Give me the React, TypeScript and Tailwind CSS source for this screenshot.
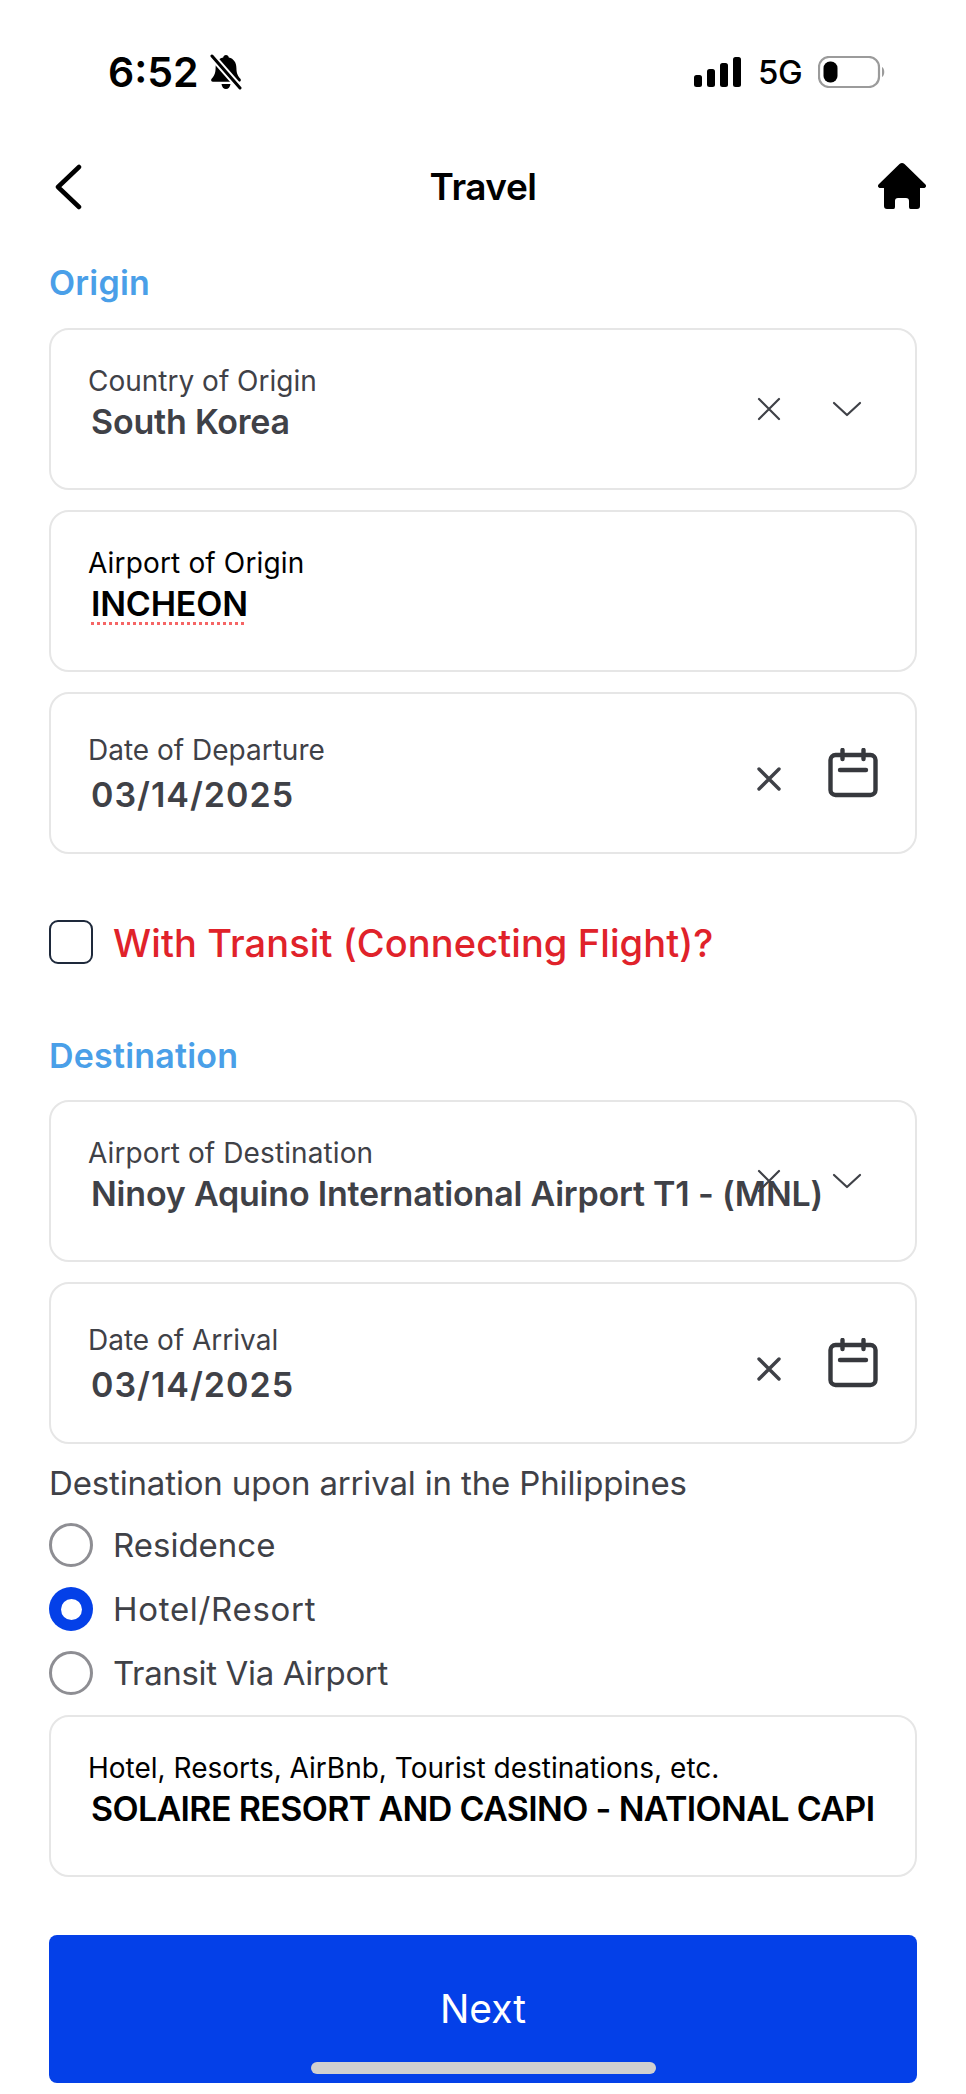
import React from "react";

const XIcon = ({ bold }: { bold?: boolean }) => (
  <svg width="26" height="26" viewBox="0 0 26 26" fill="none" stroke="#3f4147" strokeWidth={bold ? 3.4 : 2.2} strokeLinecap="round">
    <path d="M3 3 L23 23 M23 3 L3 23" />
  </svg>
);
const Chevron = () => (
  <svg width="30" height="18" viewBox="0 0 30 18" fill="none" stroke="#3f4147" strokeWidth="2.2" strokeLinecap="round" strokeLinejoin="round">
    <path d="M2 3 L15 15 L28 3" />
  </svg>
);
const Calendar = () => (
  <svg width="50" height="50" viewBox="0 0 50 50" fill="none" stroke="#36383d" strokeWidth="4.4" strokeLinecap="round" strokeLinejoin="round">
    <rect x="2.5" y="7" width="45" height="40" rx="5" />
    <path d="M14.5 2 V11 M35.5 2 V11" />
    <path d="M12 22 H38" />
  </svg>
);

function Field({ label, value, labelClass, valueClass, icons, mt, spell }: { label: string; value: string; labelClass: string; valueClass: string; icons?: "select" | "date"; mt: string; spell?: boolean }) {
  const isDate = icons === "date";
  return (
    <div className={`relative h-[162px] rounded-[20px] border-2 border-[#e6e6e6] pl-[37px] ${isDate ? "pt-[38px]" : "pt-[33px]"} ${mt}`}>
      <div className={`text-[28px] leading-[36px] ${labelClass}`}>{label}</div>
      <div className={`ml-[3px] ${isDate ? "mt-[7px]" : "mt-[3px]"} whitespace-nowrap text-[34px] leading-[40px] font-semibold ${valueClass}`}>
        <span className={spell ? "underline decoration-dotted decoration-[#f56565] decoration-[3px] underline-offset-[6px]" : ""}>{value}</span>
      </div>
      {icons === "select" && (
        <div className="absolute right-[53px] top-1/2 flex -translate-y-1/2 items-center gap-[50px]">
          <XIcon />
          <Chevron />
        </div>
      )}
      {isDate && (
        <div className="absolute right-[37px] top-[54px] flex items-start gap-[46px]">
          <div className="mt-[18px]"><XIcon bold /></div>
          <Calendar />
        </div>
      )}
    </div>
  );
}

const Radio = ({ label, on, tracking }: { label: string; on?: boolean; tracking?: string }) => (
  <div className="flex h-[44px] items-center gap-[20px]">
    {on ? (
      <div className="flex h-[44px] w-[44px] items-center justify-center rounded-full bg-[#0440e8]">
        <div className="h-[21px] w-[21px] rounded-full bg-white" />
      </div>
    ) : (
      <div className="h-[44px] w-[44px] rounded-full border-[3px] border-[#8e8e93]" />
    )}
    <span className={`text-[33px] leading-[44px] text-[#3f4147] ${tracking ?? ""}`}>{label}</span>
  </div>
);

export default function App() {
  return (
    <div className="min-h-[2094px] w-[966px] bg-white font-['Inter',sans-serif]">
      <div className="flex h-[90px] items-center justify-between pl-[108px] pr-[80px] pt-[54px]">
        <div className="flex items-center gap-[10px]">
          <span className="text-[41px] leading-[36px] font-semibold text-black">6:52</span>
          <svg width="34" height="36" viewBox="0 0 34 36">
            <path d="M17 1c1.600 0 2.600 1 2.800 2.400 5 1.200 7.600 5 7.600 10.600 0 6 2 8.600 4 10.800 1 1.200.4 3-1.400 3H4c-1.800 0-2.400-1.800-1.400-3 2-2.200 4-4.800 4-10.800 0-5.600 2.600-9.400 7.600-10.600C14.400 2 15.400 1 17 1zM12.500 30h9c-.3 3-2.200 5-4.500 5s-4.200-2-4.500-5z" fill="#000" />
            <path d="M3 2 L31 34" stroke="#fff" strokeWidth="7" />
            <path d="M3 2 L31 34" stroke="#000" strokeWidth="3" strokeLinecap="round" />
          </svg>
        </div>
        <div className="flex items-center gap-[16px]">
          <svg width="48" height="30" viewBox="0 0 48 30" fill="#000">
            <rect x="0" y="18" width="8" height="12" rx="2.500" />
            <rect x="13" y="12" width="8" height="18" rx="2.500" />
            <rect x="26" y="6" width="8" height="24" rx="2.500" />
            <rect x="39" y="0" width="8" height="30" rx="2.500" />
          </svg>
          <span className="w-[44px] text-[33px] leading-[32px] font-medium tracking-[-0.5px] text-black">5G</span>
          <svg width="68" height="32" viewBox="0 0 68 32" fill="none">
            <rect x="1" y="1" width="60" height="30" rx="10" stroke="#9b9b9b" strokeWidth="2.200" />
            <rect x="5.500" y="5.500" width="14" height="21" rx="6.500" fill="#000" />
            <path d="M64 11 C67 12.500 67 19.500 64 21 Z" fill="#9b9b9b" />
          </svg>
        </div>
      </div>

      <div className="mt-[72px] flex h-[50px] items-center">
        <div className="w-[89px] pl-[53px]">
          <svg className="block" width="30" height="46" viewBox="0 0 30 46" fill="none" stroke="#000" strokeWidth="4.500" strokeLinecap="round" strokeLinejoin="round">
            <path d="M26 3 L5 23 L26 43" />
          </svg>
        </div>
        <span className="flex-1 text-center text-[37px] leading-[46px] font-semibold tracking-[-0.5px] text-black">Travel</span>
        <div className="flex w-[89px] justify-end self-start pr-[39px]">
          <svg className="block shrink-0" width="50" height="48" viewBox="0 0 50 48" fill="#000">
            <path d="M22.500 2 Q25 0 27.500 2 L48.500 22.500 Q50 24.500 47.500 26 H43 V44 Q43 47 40 47 H33.500 Q32 47 32 45 V39 Q32 36 29 36 H21 Q18 36 18 39 V45 Q18 47 16.500 47 H10 Q7 47 7 44 V26 H2.500 Q0 24.500 1.500 22.500 Z" />
          </svg>
        </div>
      </div>

      <div className="px-[49px]">
        <div className="mt-[51px] text-[34px] leading-[40px] font-semibold tracking-[0.2px] text-[#4a9fe8]">Origin</div>
        <Field mt="mt-[25px]" label="Country of Origin" value="South Korea" labelClass="text-[#3f4147]" valueClass="text-[#3f4147] tracking-[-0.2px]" icons="select" />
        <Field mt="mt-[20px]" label="Airport of Origin" value="INCHEON" labelClass="text-black tracking-[0.15px]" valueClass="text-black tracking-[-0.2px]" spell />
        <Field mt="mt-[20px]" label="Date of Departure" value="03/14/2025" labelClass="text-[#3f4147]" valueClass="text-[#3f4147] tracking-[1px]" icons="date" />

        <div className="mt-[66px] flex h-[44px] items-center gap-[20px]">
          <div className="h-[44px] w-[44px] rounded-[9px] border-2 border-[#1e293b]" />
          <span className="relative top-[1px] text-[38px] leading-[46px] font-medium tracking-[0.1px] text-[#e0222a]">With Transit (Connecting Flight)?</span>
        </div>

        <div className="mt-[72px] text-[34px] leading-[40px] font-semibold tracking-[0.2px] text-[#4a9fe8]">Destination</div>
        <Field mt="mt-[24px]" label="Airport of Destination" value="Ninoy Aquino International Airport T1 - (MNL)" labelClass="text-[#3f4147] tracking-[0.1px]" valueClass="text-[#3f4147] tracking-[-0.2px]" icons="select" />
        <Field mt="mt-[20px]" label="Date of Arrival" value="03/14/2025" labelClass="text-[#3f4147]" valueClass="text-[#3f4147] tracking-[1px]" icons="date" />

        <div className="mt-[18px] text-[33px] leading-[42px] tracking-[-0.15px] text-[#3f4147]">Destination upon arrival in the Philippines</div>
        <div className="mt-[19px] flex flex-col gap-[20px]">
          <Radio label="Residence" />
          <Radio label="Hotel/Resort" on tracking="tracking-[0.7px]" />
          <Radio label="Transit Via Airport" tracking="tracking-[-0.35px]" />
        </div>
        <Field mt="mt-[20px]" label="Hotel, Resorts, AirBnb, Tourist destinations, etc." value="SOLAIRE RESORT AND CASINO - NATIONAL CAPI" labelClass="text-black" valueClass="text-black tracking-[-0.65px]" />

        <div className="relative mt-[58px] flex h-[148px] items-center justify-center rounded-[8px] bg-[#0440e8]">
          <span className="text-[39px] leading-[44px] text-white">Next</span>
          <div className="absolute bottom-[9px] left-[262px] h-[12px] w-[345px] rounded-full bg-[#d0d0d0]" />
        </div>
      </div>
    </div>
  );
}
